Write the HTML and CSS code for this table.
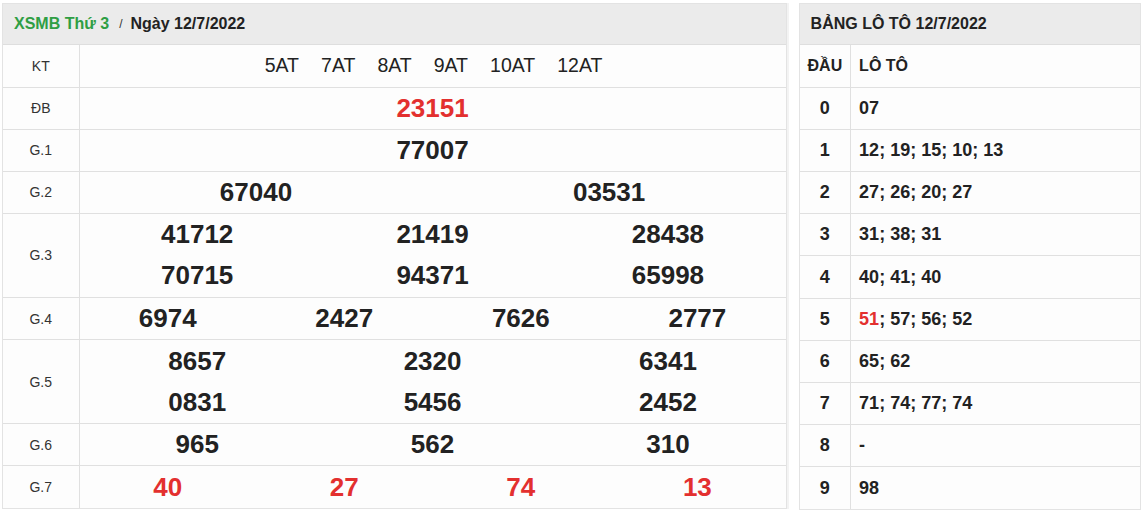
FILE: index.html
```html
<!DOCTYPE html>
<html lang="vi">
<head>
<meta charset="utf-8">
<title>XSMB 12/7/2022</title>
<link rel="stylesheet" href="styles.css">
</head>
<body>
<div class="page">
  <section class="panel results">
    <div class="panel-head">
      <span class="green">XSMB Thứ 3</span>
      <span class="sep">/</span>
      <span class="date">Ngày 12/7/2022</span>
    </div>
    <table class="kq">
      <tr class="r1">
        <td class="lbl">KT</td>
        <td class="main"><div class="kt"><span>5AT</span><span>7AT</span><span>8AT</span><span>9AT</span><span>10AT</span><span>12AT</span></div></td>
      </tr>
      <tr class="r1">
        <td class="lbl">ĐB</td>
        <td class="main"><div class="nums c1 red">
          <span>23151</span></div></td>
      </tr>
      <tr class="r1">
        <td class="lbl">G.1</td>
        <td class="main"><div class="nums c1"><span>77007</span></div></td>
      </tr>
      <tr class="r1">
        <td class="lbl">G.2</td>
        <td class="main"><div class="nums c2"><span>67040</span><span>03531</span></div></td>
      </tr>
      <tr class="r2">
        <td class="lbl">G.3</td>
        <td class="main"><div class="nums c3">
          <span>41712</span><span>21419</span><span>28438</span>
          <span>70715</span><span>94371</span><span>65998</span>
        </div></td>
      </tr>
      <tr class="r1">
        <td class="lbl">G.4</td>
        <td class="main"><div class="nums c4"><span>6974</span><span>2427</span><span>7626</span><span>2777</span></div></td>
      </tr>
      <tr class="r2">
        <td class="lbl">G.5</td>
        <td class="main"><div class="nums c3">
          <span>8657</span><span>2320</span><span>6341</span>
          <span>0831</span><span>5456</span><span>2452</span>
        </div></td>
      </tr>
      <tr class="r1">
        <td class="lbl">G.6</td>
        <td class="main"><div class="nums c3"><span>965</span><span>562</span><span>310</span></div></td>
      </tr>
      <tr class="r1">
        <td class="lbl">G.7</td>
        <td class="main"><div class="nums c4 red"><span>40</span><span>27</span><span>74</span><span>13</span></div></td>
      </tr>
    </table>
  </section>

  <section class="panel loto">
    <div class="panel-head dark">BẢNG LÔ TÔ 12/7/2022</div>
    <table class="lt">
      <tr class="lt-head"><td class="dau">ĐẦU</td><td class="val">LÔ TÔ</td></tr>
      <tr><td class="dau">0</td><td class="val">07</td></tr>
      <tr><td class="dau">1</td><td class="val">12; 19; 15; 10; 13</td></tr>
      <tr><td class="dau">2</td><td class="val">27; 26; 20; 27</td></tr>
      <tr><td class="dau">3</td><td class="val">31; 38; 31</td></tr>
      <tr><td class="dau">4</td><td class="val">40; 41; 40</td></tr>
      <tr><td class="dau">5</td><td class="val"><span class="red">51</span>; 57; 56; 52</td></tr>
      <tr><td class="dau">6</td><td class="val">65; 62</td></tr>
      <tr><td class="dau">7</td><td class="val">71; 74; 77; 74</td></tr>
      <tr><td class="dau">8</td><td class="val">-</td></tr>
      <tr><td class="dau">9</td><td class="val">98</td></tr>
    </table>
  </section>
</div>
</body>
</html>
```

FILE: styles.css
```css
* { box-sizing: border-box; }
html, body { margin: 0; padding: 0; background: #ffffff; }
body {
  font-family: "Liberation Sans", Arial, sans-serif;
  color: #222;
}
.page {
  display: flex;
  align-items: flex-start;
  gap: 12px;
  padding: 3px 2px 0 2px;
}
.panel {
  background: #fdfdfd;
  border: 1px solid #e3e3e3;
}
.results { width: 786px; box-shadow: 2px 0 0 #f3f3f3; }
.loto { width: 343px; }
.panel-head {
  height: 41px;
  background: #ebebeb;
  display: flex;
  align-items: center;
  padding: 0 11px;
  font-weight: bold;
  font-size: 16px;
  border-bottom: 1px solid #dedede;
}
.panel-head.dark { color: #222; }
.green { color: #2f9e44; }
.sep { font-size: 12px; font-weight: normal; color: #333; margin: 0 8px 0 10px; }
.date { color: #222; }

table { border-collapse: collapse; width: 100%; table-layout: fixed; }
td { border: 1px solid #e0e0e0; padding: 0; }
tr:first-child td { border-top: none; }
tr:last-child td { border-bottom: none; }
td:first-child { border-left: none; }
td:last-child { border-right: none; }

.kq .lbl {
  width: 76px;
  text-align: center;
  font-size: 14px;
  color: #333;
}
.kq tr.r1 { height: 42.1px; }
.kq tr.r2 { height: 84.2px; }
.kt {
  display: flex;
  justify-content: center;
  gap: 22px;
  font-size: 19.5px;
  color: #222;
  padding-left: 2px;
}
.nums {
  display: grid;
  font-size: 26px;
  font-weight: bold;
  color: #222;
  text-align: center;
}
.nums span { line-height: 41px; }
.c1 { grid-template-columns: 1fr; }
.c2 { grid-template-columns: 1fr 1fr; }
.c3 { grid-template-columns: 1fr 1fr 1fr; }
.c4 { grid-template-columns: 1fr 1fr 1fr 1fr; }
.red { color: #e3302f; }

.lt tr { height: 42.2px; }
.lt .dau {
  width: 51px;
  text-align: center;
  font-weight: bold;
  font-size: 18px;
}
.lt .val {
  padding-left: 8px;
  font-weight: bold;
  font-size: 18px;
}
.lt-head .dau, .lt-head .val { font-size: 16px; }
```
